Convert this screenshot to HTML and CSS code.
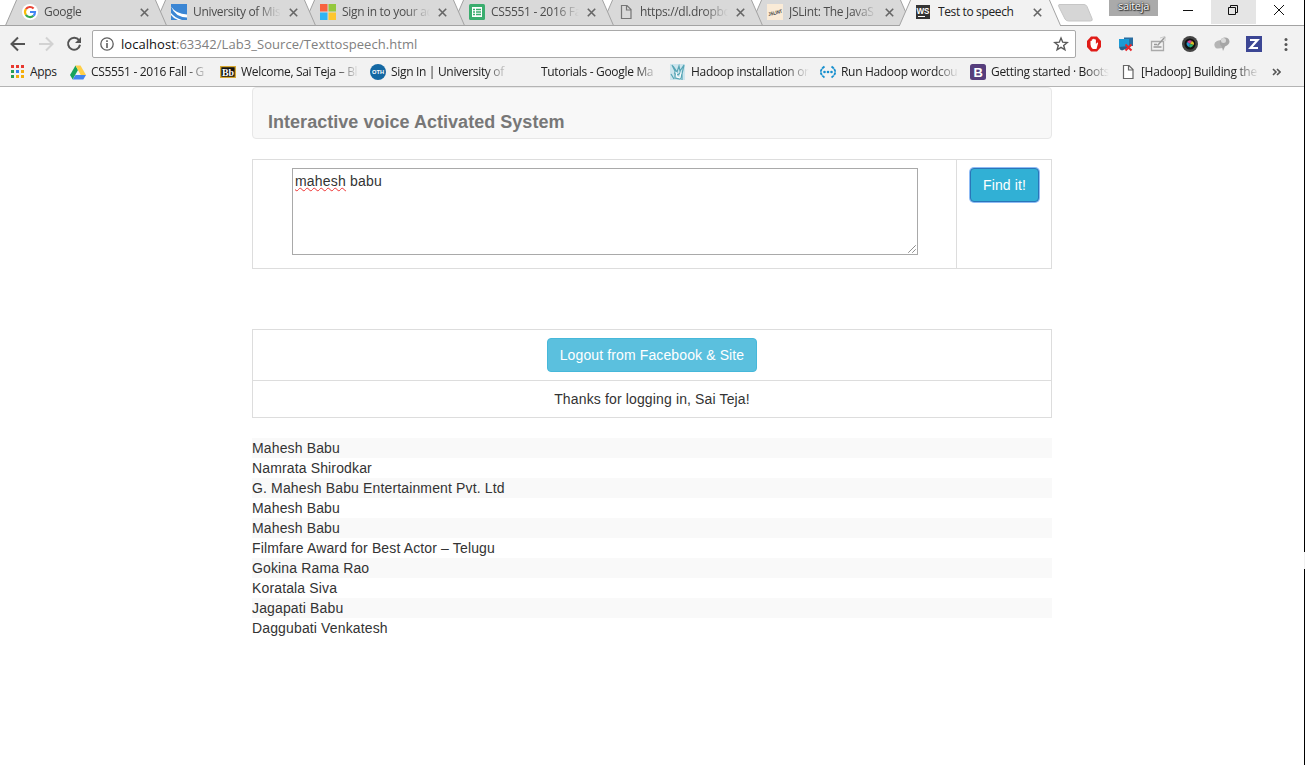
FILE: index.html
```
<!DOCTYPE html>
<html lang="en">
<head>
<meta charset="utf-8">
<title>Test to speech</title>
<link rel="stylesheet" href="styles.css">
</head>
<body>
<div class="browser">
  <header class="chrome">
    <div class="strip">
      <svg class="tab-shapes" width="1305" height="26" viewBox="0 0 1305 26">
        <defs><path id="tab" d="M5.500 25.500L17 -1H155L166.500 25.500Z" stroke="#a3a3a3"/></defs>
        <g fill="#d9d9d9">
          <use href="#tab" x="745"/><use href="#tab" x="596"/><use href="#tab" x="447"/><use href="#tab" x="298"/><use href="#tab" x="149"/><use href="#tab"/>
        </g>
        <path d="M0 25.500H1304" stroke="#a3a3a3"/>
        <use href="#tab" x="894" fill="#f2f2f2"/>
        <path d="M900 25.500H1060" stroke="#f2f2f2"/>
        <path d="M1059 4.500h25q2 0 3 2l5 12q1 2.500-1.500 2.500h-22q-2.500 0-3.500-2l-6-12q-1-2.500 0-2.500z" fill="#d6d6d6" stroke="#c6c6c6"/>
      </svg>
      <nav class="tabs">
        <div class="tab"><svg class="fav" viewBox="0 0 16 16"><circle cx="8" cy="8" r="8" fill="#fff"/><g fill="none" stroke-width="2.200"><path d="M3.900 5.200A5 5 0 0 1 11.600 4.500" stroke="#ea4335"/><path d="M3.900 5.200a5 5 0 0 0 0 5.600" stroke="#fbbc05"/><path d="M3.900 10.800a5 5 0 0 0 7.500 1" stroke="#34a853"/><path d="M11.400 11.800Q13 10.300 13 8H8" stroke="#4285f4"/></g></svg><span class="label">Google</span><svg class="x" viewBox="0 0 9 9"><path d="M.8.800l7.400 7.400M8.200.800L.8 8.200"/></svg></div>
        <div class="tab"><svg class="fav" viewBox="0 0 16 16"><path fill="#3b86d4" d="M0 0h16v16H0z"/><path d="M0 2.500Q5 10 16 10.500V13.500Q4 13 0 2.500zM0 9Q4 14 11 16H7Q2 14 0 11z" fill="#fff"/></svg><span class="label">University of Miss</span><svg class="x" viewBox="0 0 9 9"><path d="M.8.800l7.400 7.400M8.200.800L.8 8.200"/></svg></div>
        <div class="tab"><svg class="fav" viewBox="0 0 16 16"><path fill="#f8623e" d="M0 0h7.500v7.500H0z"/><path fill="#94c83d" d="M8.500 0H16v7.500H8.500z"/><path fill="#2fb4f2" d="M0 8.500h7.500V16H0z"/><path fill="#fdc62f" d="M8.500 8.500H16V16H8.500z"/></svg><span class="label">Sign in to your ac</span><svg class="x" viewBox="0 0 9 9"><path d="M.8.800l7.400 7.400M8.200.800L.8 8.200"/></svg></div>
        <div class="tab"><svg class="fav" viewBox="0 0 16 16"><rect width="16" height="16" rx="1.500" fill="#3aad6e"/><path d="M3 3h10v10H3z" fill="#fff"/><path d="M4 5.500h2M7 5.500h5M4 8h2M7 8h5M4 10.500h2M7 10.500h5" stroke="#3aad6e" stroke-width="1.300"/></svg><span class="label">CS5551 - 2016 Fa</span><svg class="x" viewBox="0 0 9 9"><path d="M.8.800l7.400 7.400M8.200.800L.8 8.200"/></svg></div>
        <div class="tab"><svg class="fav" viewBox="0 0 16 16"><path d="M3.500 1.500h5.500l4 4v9H3.500zM8.500 1.500v4.500h4.500" fill="none" stroke="#757575" stroke-width="1.200"/></svg><span class="label">https://dl.dropbo</span><svg class="x" viewBox="0 0 9 9"><path d="M.8.800l7.400 7.400M8.200.800L.8 8.200"/></svg></div>
        <div class="tab"><svg class="fav" viewBox="0 0 16 16"><path fill="#faebd7" d="M0 0h16v16H0z"/><text x="1" y="10.500" textLength="14" lengthAdjust="spacingAndGlyphs" transform="rotate(-14 8 8)" class="jsl">JSLINT</text></svg><span class="label">JSLint: The JavaS</span><svg class="x" viewBox="0 0 9 9"><path d="M.8.800l7.400 7.400M8.200.800L.8 8.200"/></svg></div>
        <div class="tab active"><svg class="fav" viewBox="0 0 16 16"><path fill="#343434" d="M1 1h14v14H1z"/><text x="1.500" y="9.500" textLength="13" lengthAdjust="spacingAndGlyphs" class="ws">WS</text><path d="M3 12.500h7" stroke="#fff"/></svg><span class="label">Test to speech</span><svg class="x" viewBox="0 0 9 9"><path d="M.8.800l7.400 7.400M8.200.800L.8 8.200"/></svg></div>
      </nav>
      <div class="user">saiteja</div>
      <div class="win"><svg viewBox="0 0 45 24"><path d="M7 10.500h10"/></svg></div>
      <div class="win hover"><svg viewBox="0 0 45 24"><path d="M17.500 7.500h7v7h-7zM19.500 7.500v-2h7v7h-2"/></svg></div>
      <div class="win"><svg viewBox="0 0 45 24"><path d="M18 5l10 10M28 5L18 15"/></svg></div>
    </div>
    <div class="toolbar">
      <svg class="nav-icons" viewBox="0 0 92 32" fill="none" stroke-width="2"><path d="M25 18H12M18 11.500L11.500 18l6.500 6.500" stroke="#545454"/><path d="M39 18h13M46 11.500l6.500 6.500-6.500 6.500" stroke="#d2d2d2"/><path d="M79 14.200A6 6 0 1 0 80 18.800" stroke="#545454"/><path d="M81 11v6h-6z" fill="#545454"/></svg>
      <div class="omnibox">
        <svg class="info" viewBox="0 0 14 14"><circle cx="7" cy="7" r="6.200" fill="none" stroke="#5f5f5f" stroke-width="1.300"/><path d="M7 6v5M7 3.300v1.600" stroke="#5f5f5f" stroke-width="1.600"/></svg>
        <span class="url">localhost<span class="path">:63342/Lab3_Source/Texttospeech.html</span></span>
        <svg class="star" viewBox="0 0 16 16"><path d="M8 2l1.700 4.200 4.500.3-3.500 2.900 1.200 4.400L8 11.300l-3.900 2.500 1.200-4.400L1.800 6.500l4.500-.3z" fill="none" stroke="#5a5a5a" stroke-width="1.400"/></svg>
      </div>
      <div class="ext">
        <svg viewBox="0 0 16 16"><path d="M5 .5h6L15 5v6l-4 4.500H5L1 11V5z" fill="#e01c18"/><path d="M4.500 8.500V5q.7-.7 1.300 0V3.500q.7-.7 1.300 0V3q.8-.6 1.400 0v.5q.8-.5 1.400.3V8l1.300-1.500q1 0 .9.800L10.500 13H6.800Q4.500 11 4.500 8.500z" fill="#fff"/></svg>
        <svg viewBox="0 0 16 16"><path d="M6 1.500h9v8.500H6z" fill="#2a6da0"/><path d="M1 3h10v8H1z" fill="#1c9ad6"/><path d="M1 11l10-1v1.500l-7 3-2-1z" fill="#28618c"/><path d="M7.500 8.500l6 6M13.500 8.500l-6 6" stroke="#e8262b" stroke-width="2"/></svg>
        <svg viewBox="0 0 16 16" fill="none"><path d="M1.500 5.500h12v9h-12z" stroke="#aaa" stroke-width="1.300"/><path d="M3.500 11h8M4 8.500h3M15 1L7.500 9.500" stroke="#999" stroke-width="1.400"/><path d="M10 2l5-1.500V5" stroke="#ccc"/></svg>
        <svg viewBox="0 0 16 16"><circle cx="8" cy="8" r="8" fill="#454545"/><circle cx="8" cy="8" r="5.500" fill="#111"/><path d="M8 8L5 6q2.500-3 5-1z" fill="#d5429b"/><path d="M8 8l2-3q3 2 1.500 4z" fill="#dfc02c"/><path d="M8 8l3.500 1q-2 3.500-4.500 2z" fill="#29b36d"/><path d="M8 8l-1 3Q3.500 9 5 6z" fill="#2799d1"/></svg>
        <svg viewBox="0 0 16 16"><path d="M1 11q-2-4 2-6 4-2 6 1v6l-5 .5q-2 .5-3-1.500z" fill="#b5b5b5"/><path d="M10 1.500q5-.5 5.500 4 0 3-4.500 5l-2 4.500-1-4q-3-3-2-6 1-3 4-3.500z" fill="#a6a6a6"/><circle cx="9.500" cy="4.500" r="2.500" fill="#d9d9d9"/></svg>
        <svg viewBox="0 0 16 16"><path d="M0 0h16v16H0z" fill="#3c4694"/><path d="M4 4h7.500L4.500 12H12" fill="none" stroke="#fff" stroke-width="2.200"/></svg>
        <svg viewBox="0 0 16 16" class="more"><g fill="#555"><circle cx="8" cy="3.500" r="1.500"/><circle cx="8" cy="8.500" r="1.500"/><circle cx="8" cy="13.500" r="1.500"/></g></svg>
      </div>
    </div>
    <nav class="bookmarks">
      <div class="bm apps"><svg viewBox="0 0 16 16"><path d="M2 2.500h13" stroke="#e8382f" stroke-width="3" stroke-dasharray="3 2"/><path d="M2 7.500h3" stroke="#269d55" stroke-width="3"/><path d="M7 7.500h3" stroke="#2f80f0" stroke-width="3"/><path d="M12 7.500h3" stroke="#f3ae0a" stroke-width="3"/><path d="M2 12.500h3" stroke="#269d55" stroke-width="3"/><path d="M7 12.500h8" stroke="#f3ae0a" stroke-width="3" stroke-dasharray="3 2"/></svg><span class="label">Apps</span></div>
      <div class="bm"><svg viewBox="0 0 16 16"><path d="M5.500 1.500L0 11l2.700 4.500L8 6z" fill="#16a35b"/><path d="M5.500 1.500h5L16 11h-5.300z" fill="#ffcf48"/><path d="M5.500 11H16l-2.700 4.500H2.700z" fill="#4084ef"/></svg><span class="label">CS5551 - 2016 Fall - G</span></div>
      <div class="bm"><svg viewBox="0 0 16 16"><path d="M.7 2.700h14.600v10.600H.7z" fill="#111" stroke="#d8a830" stroke-width="1.300"/><text x="2" y="11.500" textLength="12" lengthAdjust="spacingAndGlyphs" class="bb">Bb</text></svg><span class="label">Welcome, Sai Teja – Bl</span></div>
      <div class="bm"><svg viewBox="0 0 16 16"><circle cx="8" cy="8" r="8" fill="#1468a3"/><text x="2" y="10.200" textLength="12" lengthAdjust="spacingAndGlyphs" class="oth">OTH</text></svg><span class="label">Sign In | University of</span></div>
      <div class="bm"><svg viewBox="0 0 16 16"></svg><span class="label">Tutorials - Google Ma</span></div>
      <div class="bm"><svg viewBox="0 0 16 16" fill="none"><path d="M0 0h15v16H0z" fill="#cde5ed"/><path d="M2 1l3 6v7l5 1 2-5 2-9-4 6-1-5-2 6-4-6M4 9l4 2 3-3M1 10l3 5M12 10v6" stroke="#56a5b5" stroke-width="1.200"/><path d="M6 8l1 5 3 1 1-6" stroke="#fff"/></svg><span class="label">Hadoop installation on</span></div>
      <div class="bm"><svg viewBox="0 0 16 16" fill="none"><path d="M4.500 2.500Q-3 8 4.500 13.500M11.500 2.500q7.500 5.500 0 11" stroke="#168fce" stroke-width="1.800" stroke-dasharray="3 .6"/><g fill="#168fce"><circle cx="4.500" cy="8" r="1.300"/><circle cx="8" cy="8" r="1.300"/><circle cx="11.500" cy="8" r="1.300"/></g></svg><span class="label">Run Hadoop wordcou</span></div>
      <div class="bm"><svg viewBox="0 0 16 16"><rect width="16" height="16" rx="2.500" fill="#563d7c"/><text x="3.500" y="12.500" class="boot">B</text></svg><span class="label">Getting started · Boots</span></div>
      <div class="bm"><svg viewBox="0 0 16 16"><path d="M3.500 1.500h5.500l4 4v9H3.500zM8.500 1.500v4.500h4.500" fill="#fff" stroke="#666" stroke-width="1.200"/></svg><span class="label">[Hadoop] Building the</span></div>
      <svg class="chev" viewBox="0 0 9 8"><path d="M1 1l3 3-3 3M5 1l3 3-3 3" fill="none" stroke="#555" stroke-width="1.600"/></svg>
    </nav>
  </header>
  <main class="page">
    <div class="navbar">Interactive voice Activated System</div>
    <div class="search">
      <div class="query"><div class="box"><span class="typo">mahesh</span> babu<svg class="grip" viewBox="0 0 8 8"><path d="M.5 7.500l7-7M4.500 7.500l3-3" stroke="#555" stroke-dasharray="1.200 .3"/></svg></div></div>
      <div class="action"><button class="btn focused">Find it!</button></div>
    </div>
    <div class="session">
      <div class="row"><button class="btn">Logout from Facebook &amp; Site</button></div>
      <div class="row thanks">Thanks for logging in, Sai Teja!</div>
    </div>
    <div class="results">
      <div>Mahesh Babu</div>
      <div>Namrata Shirodkar</div>
      <div>G. Mahesh Babu Entertainment Pvt. Ltd</div>
      <div>Mahesh Babu</div>
      <div>Mahesh Babu</div>
      <div>Filmfare Award for Best Actor – Telugu</div>
      <div>Gokina Rama Rao</div>
      <div>Koratala Siva</div>
      <div>Jagapati Babu</div>
      <div>Daggubati Venkatesh</div>
    </div>
  </main>
  <div class="edge"></div>
</div>
</body>
</html>
```
FILE: styles.css
```
* { box-sizing: border-box; }
body { margin: 0; background: #fff; overflow: hidden; }
svg { display: block; flex: none; }
.browser { position: relative; width: 1305px; height: 765px; font: 14px/20px "Liberation Sans", Arial, sans-serif; color: #333; }
.chrome { height: 87px; background: #f2f2f2; border-bottom: 1px solid #b4b4b4; font: 12px/16px "Open Sans", "Noto Sans", sans-serif; letter-spacing: -0.32px; }
.strip { position: relative; display: flex; height: 26px; background: #fff; }
.tab-shapes { position: absolute; left: 0; top: 0; }
.tabs { position: relative; display: flex; width: 1109px; padding-left: 22px; }
.tab { display: flex; width: 149px; height: 24px; align-items: center; color: #4c4c4c; }
.tab.active { color: #222; }
.fav { width: 16px; height: 16px; margin-right: 6px; }
.tab .label { width: 88px; margin-right: 8px; }
.tab.active .label { width: 87px; letter-spacing: -0.37px; }
.tab.active .fav { margin-left: -1px; margin-right: 7px; }
.label { overflow: hidden; white-space: nowrap; -webkit-mask-image: linear-gradient(90deg, #000 calc(100% - 24px), transparent); mask-image: linear-gradient(90deg, #000 calc(100% - 24px), transparent); }
.tab.active .label { -webkit-mask-image: none; mask-image: none; }
.x { width: 9px; height: 9px; fill: none; stroke: #666; stroke-width: 1.6; }
.jsl { font: bold 5px "Liberation Sans", sans-serif; fill: #333; letter-spacing: 0; }
.ws { font: bold 9px "Liberation Sans", sans-serif; fill: #fff; letter-spacing: 0; }
.bb { font: bold 10px "Liberation Serif", serif; fill: #fff; letter-spacing: 0; }
.oth { font: bold 6px "Liberation Sans", sans-serif; fill: #fff; letter-spacing: 0; }
.boot { font: bold 13px "Liberation Sans", sans-serif; fill: #fff; letter-spacing: 0; }
.user { position: relative; width: 49px; height: 16px; margin-right: 8px; background: #aaa; color: #fff; font-size: 11px; line-height: 12px; text-align: center; text-shadow: 0 0 1px #222, 0 0 2px #222, 1px 1px 1px #333; }
.win { position: relative; width: 45px; height: 24px; }
.win svg { width: 45px; height: 24px; fill: none; stroke: #111; }
.win:nth-last-child(3) svg { margin-left: 10px; }
.win.hover { background: #e5e5e5; }
.toolbar { display: flex; height: 32px; }
.nav-icons { width: 92px; height: 32px; }
.omnibox { display: flex; align-items: center; width: 984px; height: 28px; margin-top: 4px; padding: 0 6px 0 7px; background: #fff; border: 1px solid #a9a9a9; border-radius: 2px; }
.info { width: 14px; height: 14px; margin-right: 7px; }
.url { flex: 1; font-size: 13px; color: #111; letter-spacing: 0.05px; }
.path { color: #808080; }
.star { width: 16px; height: 16px; }
.ext { display: flex; gap: 16px; padding: 10px 0 0 10px; }
.ext svg { width: 16px; height: 16px; }
.bookmarks { display: flex; align-items: center; height: 28px; padding-left: 9px; }
.bm { display: flex; align-items: center; width: 150px; color: #222; }
.bm svg { width: 16px; height: 16px; margin-right: 5px; }
.bm .label { width: 118px; }
.bm.apps { width: 61px; }
.bm.apps .label { width: 38px; -webkit-mask-image: none; mask-image: none; }
.chev { width: 9px; height: 8px; margin-left: 2px; }
.page { width: 800px; margin-left: 252px; letter-spacing: 0.14px; }
.navbar { height: 52px; padding: 24px 15px 0; background: #f8f8f8; border: 1px solid #e7e7e7; border-radius: 4px; font-size: 18px; font-weight: bold; letter-spacing: 0.03px; color: #777; }
.search { display: flex; height: 110px; margin-top: 20px; border: 1px solid #ddd; }
.query { width: 703px; padding: 8px 0 0 39px; }
.box { position: relative; width: 626px; height: 87px; padding: 2px; border: 1px solid #a9a9a9; letter-spacing: 0.2px; }
.typo { text-decoration: underline wavy #e33 1px; text-underline-offset: 1px; text-decoration-skip-ink: none; }
.grip { position: absolute; right: 1px; bottom: 1px; width: 8px; height: 8px; }
.action { flex: 1; padding: 8px 12px 8px 13px; border-left: 1px solid #ddd; }
.btn { display: block; height: 34px; padding: 6px 12px; border: 1px solid #46b8da; border-radius: 4px; background: #5bc0de; color: #fff; font: 14px/20px "Liberation Sans", Arial, sans-serif; letter-spacing: 0.12px; white-space: nowrap; }
.btn.focused { width: 69px; background: #31b0d5; border-color: #2a75b8; box-shadow: 0 0 0 1px #8fbcf5; }
.session { height: 89px; margin-top: 60px; border: 1px solid #ddd; }
.row { display: flex; justify-content: center; padding: 8px; }
.thanks { border-top: 1px solid #ddd; }
.results { margin-top: 20px; }
.results div:nth-child(odd) { background: #f9f9f9; }
.edge { position: absolute; right: 0; top: 0; width: 1px; height: 765px; background: linear-gradient(#000 552px, #f0f0f0 552px 569px, #000 569px); }
```
